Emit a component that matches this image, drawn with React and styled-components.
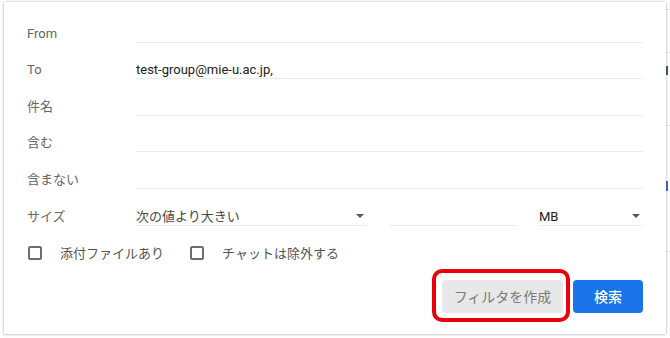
import React from 'react'
import styled, { createGlobalStyle } from 'styled-components'

const GlobalStyle = createGlobalStyle`
  html, body {
    margin: 0;
    padding: 0;
    background: #fff;
  }
  body {
    font-family: Roboto, "Noto Sans CJK JP", "Noto Sans", sans-serif;
    overflow: hidden;
  }
`

const Page = styled.div`
  width: 670px;
  height: 338px;
  display: flex;
  align-items: flex-start;
`

const Panel = styled.form`
  position: relative;
  box-sizing: border-box;
  margin: 2px 0 0 4px;
  width: 662px;
  height: 332px;
  padding: 4px 23px 0 23px;
  background: #fff;
  box-shadow: 0 0 2px rgba(0, 0, 0, 0.28), 0 1px 3px rgba(0, 0, 0, 0.12);
  display: flex;
  flex-direction: column;
`

const Row = styled.div`
  display: flex;
  align-items: flex-end;
  height: 36.6px;
`

const Label = styled.div`
  width: 109px;
  flex: none;
  font-size: 13px;
  line-height: 16px;
  margin-bottom: 1px;
  color: #666;
`

const Field = styled.div`
  flex-basis: ${p => (p.$width ? `${p.$width}px` : 'auto')};
  flex-grow: ${p => (p.$width ? 0 : 1)};
  flex-shrink: 0;
  margin-left: ${p => p.$gap || 0}px;
  height: 100%;
  box-sizing: border-box;
  border-bottom: 1px solid #ebebeb;
  display: flex;
  align-items: flex-end;
  justify-content: space-between;
  padding-bottom: 0;
  font-size: 13px;
  line-height: 17px;
  color: ${p => (p.$muted ? '#474747' : '#222')};
`

const Arrow = styled.span`
  width: 0;
  height: 0;
  border-left: 4.5px solid transparent;
  border-right: 4.5px solid transparent;
  border-top: 4.5px solid #555;
  margin: 0 3px 7px 0;
`

const CheckRow = styled.div`
  display: flex;
  align-items: center;
  height: 28px;
  margin-top: 13px;
  padding-left: 1px;
`

const Check = styled.label`
  display: flex;
  align-items: center;
  font-size: 13px;
  color: #555;
  margin-right: 26px;
`

const Box = styled.span`
  width: 10px;
  height: 10px;
  border: 2px solid #6e6e6e;
  border-radius: 2px;
  margin-right: 18px;
`

const Actions = styled.div`
  display: flex;
  justify-content: flex-end;
  gap: 10px;
  margin-top: 13px;
`

const Button = styled.button`
  height: 33px;
  border: none;
  border-radius: 4px;
  font-family: inherit;
  font-size: 14px;
  padding: 0;
  width: ${p => p.$w}px;
  background: ${p => (p.$primary ? '#1a73e8' : '#e8e8e8')};
  color: ${p => (p.$primary ? '#fff' : '#7a7a7a')};
  font-weight: ${p => (p.$primary ? 500 : 400)};
`

const Highlight = styled.div`
  position: absolute;
  left: 428px;
  top: 267px;
  width: 130px;
  height: 45px;
  border: 4px solid #e8000b;
  border-radius: 10px;
  pointer-events: none;
`

const Strip = styled.div`
  flex: 1;
  height: 100%;
  display: flex;
  flex-direction: column;
`

const StripLine = styled.div`
  height: 1px;
  margin-top: ${p => p.$top}px;
  background: ${p => p.$color || '#e6e6e6'};
`

const StripBit = styled.div`
  width: 2px;
  height: ${p => p.$h}px;
  margin-top: ${p => p.$top}px;
  background: ${p => p.$color};
`

const rows = [
  { label: 'From' },
  { label: 'To', value: 'test-group@mie-u.ac.jp,' },
  { label: '件名' },
  { label: '含む' },
  { label: '含まない' },
]

export default function App() {
  return (
    <>
      <GlobalStyle />
      <Page>
        <Panel onSubmit={e => e.preventDefault()}>
          {rows.map(r => (
            <Row key={r.label}>
              <Label>{r.label}</Label>
              <Field>{r.value}</Field>
            </Row>
          ))}
          <Row>
            <Label>サイズ</Label>
            <Field $width={231} $muted>
              次の値より大きい
              <Arrow />
            </Field>
            <Field $width={127} $gap={23} />
            <Field $gap={22}>
              MB
              <Arrow />
            </Field>
          </Row>
          <CheckRow>
            <Check><Box />添付ファイルあり</Check>
            <Check><Box />チャットは除外する</Check>
          </CheckRow>
          <Actions>
            <Button type="button" $w={121}>フィルタを作成</Button>
            <Button type="submit" $w={70} $primary>検索</Button>
          </Actions>
          <Highlight />
        </Panel>
        <Strip>
          <StripLine $top={9} />
          <StripLine $top={42} />
          <StripBit $top={13} $h={9} $color="#4a5a80" />
          <StripLine $top={50} />
          <StripBit $top={55} $h={10} $color="#3b6fd0" />
          <StripLine $top={60} />
        </Strip>
      </Page>
    </>
  )
}
